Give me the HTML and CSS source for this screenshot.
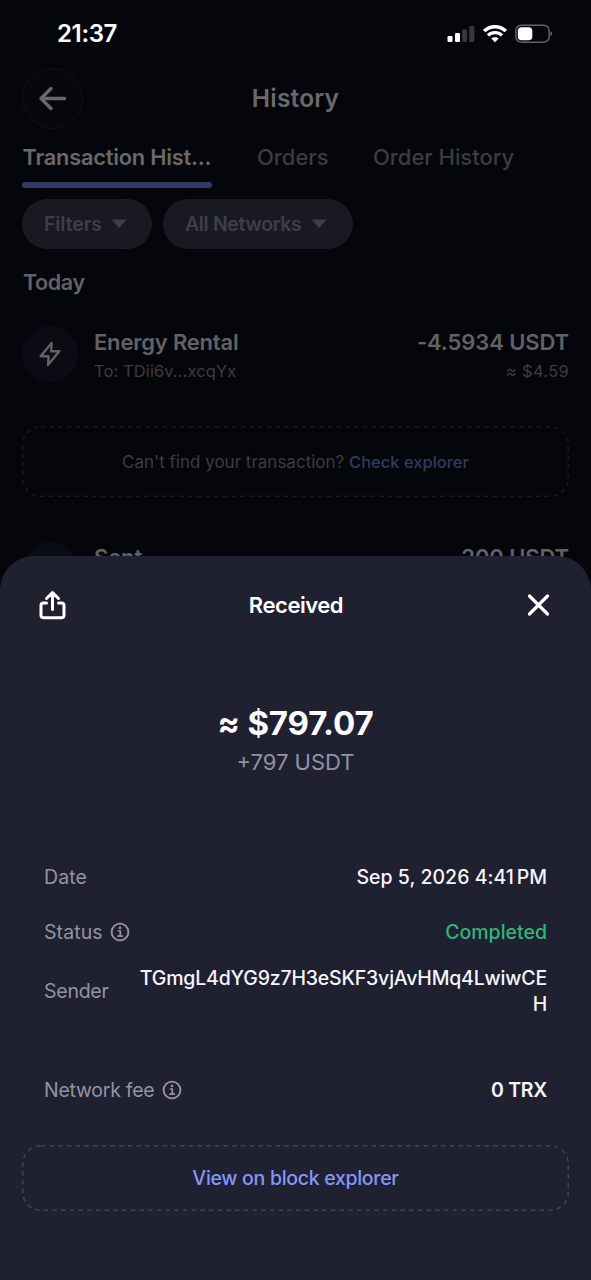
FILE: index.html
```
<!DOCTYPE html>
<html lang="en">
<head>
<meta charset="utf-8">
<title>History</title>
<link rel="stylesheet" href="styles.css">
</head>
<body>
<div class="screen">
  <div class="statusbar">
    <span class="clock">21:37</span>
    <div class="indicators">
      <svg width="28" height="18" viewBox="0 0 28 18"><rect x="0.5" y="11" width="5" height="6" rx="1.3" fill="#fff"/><rect x="8" y="8" width="5" height="9" rx="1.3" fill="#fff"/><rect x="15.200" y="4.500" width="5" height="12.500" rx="1.300" fill="#39393d"/><rect x="22.300" y="1" width="5" height="16" rx="1.300" fill="#39393d"/></svg>
      <svg class="wifi" width="24" height="18" viewBox="0 0 24 18" fill="none" stroke="#fff"><path d="M1.200 6.100C7.200.2 16.800.2 22.800 6.100" stroke-width="3.500"/><path d="M5 10.300C8.800 6.600 15.200 6.600 19 10.300" stroke-width="3.200"/><path d="M12 17.300L8.300 13.600C10.200 11.700 13.800 11.700 15.700 13.600Z" fill="#fff" stroke="none"/></svg>
      <svg class="battery" width="38" height="20" viewBox="0 0 38 20"><rect x="0.800" y="1.200" width="33.400" height="17" rx="5.500" fill="none" stroke="#636367" stroke-width="1.500"/><rect x="2.800" y="3.200" width="14.500" height="13" rx="3.800" fill="#fff"/><path d="M35.500 7.200Q37.300 8 37.300 9.700T35.500 12.200Z" fill="#636367"/></svg>
    </div>
  </div>

  <header class="topbar">
    <button class="back" aria-label="Back"><svg width="30" height="26" viewBox="0 0 30 26" fill="none" stroke="#69696b" stroke-width="3.300" stroke-linecap="round" stroke-linejoin="round"><path d="M26.500 12.500H3M13 2.500L3 12.500L13 22.500"/></svg></button>
    <h1 class="title">History</h1>
  </header>

  <nav class="tabs">
    <span class="tab tab-active">Transaction Hist...</span>
    <span class="tab tab-orders">Orders</span>
    <span class="tab">Order History</span>
  </nav>

  <div class="chips">
    <span class="chip">Filters<svg class="caret" width="16" height="10" viewBox="0 0 16 10"><path d="M1.500 1H14.500L8 8.500Z" fill="#3e3e48" stroke="#3e3e48" stroke-linejoin="round"/></svg></span>
    <span class="chip chip-networks">All Networks<svg class="caret" width="16" height="10" viewBox="0 0 16 10"><path d="M1.500 1H14.500L8 8.500Z" fill="#3e3e48" stroke="#3e3e48" stroke-linejoin="round"/></svg></span>
  </div>

  <h2 class="day">Today</h2>

  <div class="tx">
    <span class="tx-icon"><svg width="24" height="28" viewBox="0 0 24 28" fill="none" stroke="#626264" stroke-width="2.400" stroke-linejoin="round"><path d="M13.600 3L2.600 16.300H10.600L10 25L21.300 11.200H13.200Z"/></svg></span>
    <div class="tx-main"><span class="tx-name tx-energy">Energy Rental</span><span class="tx-sub">To: TDii6v...xcqYx</span></div>
    <div class="tx-side"><span class="tx-name">-4.5934 USDT</span><span class="tx-sub tx-fiat">≈ $4.59</span></div>
  </div>

  <div class="hint">
    <svg class="dashes" width="547" height="71"><rect x="0.750" y="0.750" width="545.500" height="69.500" rx="18"/></svg>
    <span>Can't find your transaction? <a class="hint-link">Check explorer</a></span>
  </div>

  <div class="tx tx-second">
    <span class="tx-icon tx-icon-sent"></span>
    <div class="tx-main"><span class="tx-name">Sent</span></div>
    <div class="tx-side"><span class="tx-name">200 USDT</span></div>
  </div>

  <section class="sheet">
    <div class="sheet-head">
      <svg width="28" height="30" viewBox="0 0 28 30" fill="none" stroke="#fff" stroke-width="3" stroke-linecap="round" stroke-linejoin="round"><path d="M14.500 19.500V3M8.500 8.500L14.500 2.500L20.500 8.500M8.500 13H5.500Q3 13 3 15.500V25Q3 27.800 5.800 27.800H23.200Q26 27.800 26 25V15.500Q26 13 23.500 13H20.500"/></svg>
      <h2 class="sheet-title">Received</h2>
      <svg width="24" height="24" viewBox="0 0 24 24" stroke="#fff" stroke-width="3.200" stroke-linecap="round"><path d="M3.500 3L21.500 21M21.500 3L3.500 21"/></svg>
    </div>

    <div class="fiat">≈ $797.07</div>
    <div class="token">+797 USDT</div>

    <div class="rows">
      <div class="row"><span class="label label-date">Date</span><span class="value value-date">Sep 5, 2026 4:41<span class="thin"> </span>PM</span></div>
      <div class="row row-status"><span class="label label-status">Status<svg class="info" width="20" height="20" viewBox="0 0 20 20" fill="none" stroke="#9492a5"><circle cx="10" cy="10" r="8.400" stroke-width="1.900"/><path d="M7.800 9H10.300V14M7.300 14.200H13" stroke-width="1.700"/><circle cx="10" cy="5.900" r="1.350" fill="#9492a5" stroke="none"/></svg></span><span class="value done">Completed</span></div>
      <div class="row row-sender"><span class="label">Sender</span><span class="value address">TGmgL4dYG9z7H3eSKF3vjAvHMq4LwiwCEH</span></div>
      <div class="row row-fee"><span class="label">Network fee<svg class="info" width="20" height="20" viewBox="0 0 20 20" fill="none" stroke="#9492a5"><circle cx="10" cy="10" r="8.400" stroke-width="1.900"/><path d="M7.800 9H10.300V14M7.300 14.200H13" stroke-width="1.700"/><circle cx="10" cy="5.900" r="1.350" fill="#9492a5" stroke="none"/></svg></span><span class="value value-fee">0 TRX</span></div>
    </div>

    <a class="explorer">
      <svg class="dashes dashes-light" width="547" height="66"><rect x="0.750" y="0.750" width="545.500" height="64.500" rx="18"/></svg>
      <span>View on block explorer</span>
    </a>
  </section>
</div>
</body>
</html>
```
FILE: styles.css
```
* { box-sizing: border-box; }
body { margin: 0; background: #05060b; font-family: Inter, "Noto Sans", sans-serif; }
svg { display: block; flex: none; }
h1, h2 { margin: 0; }

.screen { position: relative; width: 591px; height: 1280px; overflow: hidden; background: #05060b; padding: 0 22px; }

.statusbar { display: flex; justify-content: space-between; align-items: center; height: 68px; padding: 0 16px 0 35px; color: #fff; }
.clock { font-size: 24px; font-weight: 600; line-height: 30px; letter-spacing: -0.35px; }
.indicators { display: flex; align-items: center; }
.wifi { margin-left: 8px; }
.battery { margin-left: 8px; }

.topbar { display: grid; grid-template-columns: 61px 1fr 61px; align-items: center; height: 61px; }
.back { display: flex; align-items: center; justify-content: center; width: 61px; height: 61px; padding: 0; border: 1.5px solid #111216; border-radius: 50%; background: #07080c; }
.title { margin-top: -2px; text-align: center; font-size: 24.5px; font-weight: 600; line-height: 30px; letter-spacing: 0.2px; color: #69696b; }

.tabs { display: flex; gap: 45px; height: 59px; color: #3c3c40; font-size: 22px; font-weight: 500; line-height: 28px; letter-spacing: -0.05px; white-space: nowrap; }
.tab { height: 59px; padding-top: 14px; }
.tab-active { display: flex; flex-direction: column; justify-content: space-between; width: 190px; font-weight: 600; font-size: 21.8px; letter-spacing: -0.2px; text-indent: 0.5px; color: #69696b; }
.tab-active::after { content: ""; height: 6px; border-radius: 3px; background: #333a65; }
.tab-orders { width: 71px; }

.chips { display: flex; gap: 11px; margin-top: 11px; }
.chip { display: flex; align-items: center; gap: 9px; width: 130px; height: 50px; padding-left: 22px; border-radius: 25px; background: #181922; color: #3e3e48; font-size: 19.5px; font-weight: 600; line-height: 24px; letter-spacing: -0.1px; white-space: nowrap; }
.chip-networks { width: 190px; letter-spacing: -0.35px; }

.day { margin-top: 19px; padding-left: 1px; font-size: 21.5px; font-weight: 600; line-height: 28px; letter-spacing: -0.4px; color: #626264; }

.tx { display: flex; align-items: center; height: 56px; margin-top: 30px; }
.tx-icon { display: flex; align-items: center; justify-content: center; width: 56px; height: 56px; border-radius: 50%; background: #0a0b13; }
.tx-main { display: flex; flex-direction: column; gap: 4px; margin-left: 16px; margin-right: auto; padding-top: 2px; }
.tx-side { display: flex; flex-direction: column; gap: 4px; align-items: flex-end; padding-top: 2px; }
.tx-name { font-size: 22px; font-weight: 600; line-height: 28px; letter-spacing: -0.1px; color: #626264; }
.tx-energy { letter-spacing: -0.2px; }
.tx-sub { font-size: 16.5px; line-height: 22px; letter-spacing: 0.1px; color: #3c3c40; }
.tx-fiat { letter-spacing: 0.3px; }
.tx-second { margin-top: 45px; align-items: flex-start; }
.tx-second .tx-name { line-height: 26px; }
.tx-icon-sent { background: #080c14; }

.hint { position: relative; display: flex; align-items: center; justify-content: center; height: 71px; margin-top: 44px; font-size: 17px; line-height: 22px; color: #3c3c40; }
.hint-link { font-size: 16.5px; font-weight: 500; color: #333a65; }
.dashes { position: absolute; inset: 0; fill: none; stroke: #191a20; stroke-width: 1.5; stroke-dasharray: 4.6 4.1; }
.dashes-light { stroke: #414356; }

.sheet { position: absolute; left: 0; right: 0; top: 556px; bottom: 0; padding: 0 22px; border-radius: 34px 34px 0 0; background: #1f2030; }
.sheet-head { display: flex; align-items: center; justify-content: space-between; height: 98px; padding: 0 19px 0 16px; }
.sheet-title { font-size: 22px; font-weight: 600; line-height: 28px; letter-spacing: -0.45px; color: #fff; }
.fiat { margin-top: 49px; text-align: center; font-size: 33px; font-weight: 700; line-height: 40px; letter-spacing: -0.15px; color: #fafaff; }
.token { margin-top: 5px; text-align: center; font-size: 22px; line-height: 28px; color: #9492a5; }

.rows { display: flex; flex-direction: column; margin-top: 73px; padding: 0 22px; }
.row { display: flex; align-items: center; justify-content: space-between; height: 56px; font-size: 19.5px; line-height: 26px; white-space: nowrap; }
.row-status { height: 54px; }
.label { display: flex; align-items: center; letter-spacing: -0.25px; color: #9492a5; }
.label-date, .label-status { letter-spacing: 0.1px; }
.info { margin-left: 7px; }
.value { font-weight: 500; text-align: right; color: #f5f5fb; }
.value-date { letter-spacing: 0.03px; }
.thin { word-spacing: -2.5px; }
.done { color: #2fb67c; }
.row-sender { height: 62px; margin-top: 1px; }
.address { width: 410px; white-space: normal; word-break: break-all; letter-spacing: -0.18px; }
.value-fee { font-weight: 600; letter-spacing: -0.3px; }
.row-fee { margin-top: 40px; }

.explorer { position: relative; display: flex; align-items: center; justify-content: center; height: 66px; margin-top: 27px; font-size: 19.5px; font-weight: 500; line-height: 26px; letter-spacing: -0.3px; color: #8397fb; }
```
